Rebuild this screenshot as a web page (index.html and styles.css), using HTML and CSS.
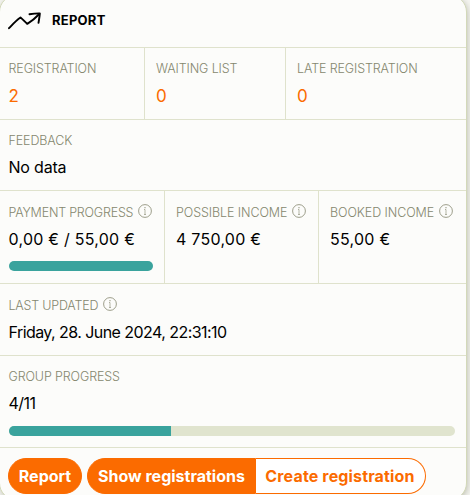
FILE: index.html
```
<!DOCTYPE html>
<html lang="en">
<head>
    <meta charset="UTF-8">
    <meta name="viewport" content="width=device-width, initial-scale=1.0">
    <title>Report</title>
    <link rel="stylesheet" href="styles.css">
</head>
<body>
    <svg class="sprite" width="0" height="0">
        <symbol id="info" viewBox="0 0 14 14">
            <circle cx="7" cy="7" r="6.4" fill="none" stroke="currentColor" stroke-width="0.8"/>
            <path d="M6 5.500H7V10.500M6 10.500H8" fill="none" stroke="currentColor" stroke-width="0.6"/>
            <circle cx="7" cy="3.7" r="0.6" fill="currentColor"/>
        </symbol>
    </svg>

    <div class="card">
        <div class="card-header">
            <svg class="trend-icon" width="34" height="18" viewBox="0 0 34 18" fill="none" stroke="#000" stroke-width="1.9" stroke-linecap="round" stroke-linejoin="round">
                <path d="M1 16.200C4.500 12.500 8 8.500 12.500 5.500C15 7.500 17 10 19.300 11.900C23.500 9.300 27.500 6 31.300 2"/>
                <path d="M21.500 2.300C25 1.700 28.500 1.300 31.800 1.400C31.700 4.500 31 7.500 30.500 10.800"/>
            </svg>
            <h2>REPORT</h2>
        </div>

        <div class="row">
            <div class="cell registration">
                <div class="label">REGISTRATION</div>
                <a href="#" class="value count">2</a>
            </div>
            <div class="cell waiting">
                <div class="label">WAITING LIST</div>
                <a href="#" class="value count">0</a>
            </div>
            <div class="cell">
                <div class="label">LATE REGISTRATION</div>
                <a href="#" class="value count">0</a>
            </div>
        </div>

        <div class="row feedback">
            <div class="cell">
                <div class="label">FEEDBACK</div>
                <div class="value">No data</div>
            </div>
        </div>

        <div class="row income">
            <div class="cell payment">
                <div class="label with-info">PAYMENT PROGRESS <svg class="info"><use href="#info"/></svg></div>
                <div class="value amount">0,00 € / 55,00 €</div>
                <div class="progress"><div class="progress-bar" style="width: 100%"></div></div>
            </div>
            <div class="cell possible">
                <div class="label with-info">POSSIBLE INCOME <svg class="info"><use href="#info"/></svg></div>
                <div class="value amount">4 750,00 €</div>
            </div>
            <div class="cell booked">
                <div class="label with-info">BOOKED INCOME <svg class="info"><use href="#info"/></svg></div>
                <div class="value amount">55,00 €</div>
            </div>
        </div>

        <div class="row">
            <div class="cell">
                <div class="label with-info">LAST UPDATED <svg class="info"><use href="#info"/></svg></div>
                <div class="value date">Friday, 28. June 2024, 22:31:10</div>
            </div>
        </div>

        <div class="row group">
            <div class="cell">
                <div class="label">GROUP PROGRESS</div>
                <div class="value ratio">4/11</div>
                <div class="progress"><div class="progress-bar" style="width: 36.36%"></div></div>
            </div>
        </div>

        <div class="card-footer">
            <a href="#" class="btn btn-report">Report</a>
            <div class="btn-group">
                <a href="#" class="btn btn-show">Show registrations</a>
                <a href="#" class="btn btn-create">Create registration</a>
            </div>
        </div>
    </div>
</body>
</html>
```
FILE: styles.css
```
* {
    box-sizing: border-box;
}

body {
    margin: 0;
    height: 495px;
    overflow: hidden;
    background-color: #f6f6f2;
    font-family: Inter, "Liberation Sans", sans-serif;
    color: #000;
}

.sprite {
    display: none;
}

.card {
    width: 468px;
    height: 505px;
    margin: -5px 0 0 -1px;
    background-color: #fcfcfa;
    border: 1px solid #d3d9b9;
    border-radius: 17px;
    box-shadow: 1px 2px 6px rgba(70, 75, 40, 0.3);
}

.card-header {
    display: flex;
    height: 51px;
    padding: 15px 8px 0;
    gap: 10px;
}

.trend-icon {
    margin-top: 1px;
    flex: none;
}

h2 {
    margin: 0;
    font-size: 13px;
    line-height: 18px;
    font-weight: 700;
    letter-spacing: 0.25px;
}

.row {
    display: flex;
    height: 72px;
    border-top: 1px solid #dfe2cc;
}

.feedback {
    height: 71px;
}

.income {
    height: 93px;
}

.group {
    height: 92px;
}

.cell {
    flex: 1;
    min-width: 0;
    padding: 12px 11px 0;
    border-left: 1px solid #dfe2cc;
    white-space: nowrap;
}

.cell:first-child {
    padding-left: 8.5px;
    border-left: none;
}

.registration {
    flex: 0 0 144px;
}

.waiting {
    flex: 0 0 141px;
}

.payment {
    flex: 0 0 164px;
}

.possible {
    flex: 0 0 154px;
}

.label {
    display: flex;
    gap: 5px;
    height: 18px;
    line-height: 18px;
    font-size: 12.5px;
    font-weight: 300;
    letter-spacing: -0.12px;
    color: #85876e;
}

.with-info {
    height: 19px;
    padding-top: 1px;
    letter-spacing: -0.21px;
}

.possible .label,
.booked .label {
    letter-spacing: -0.08px;
}

.info {
    width: 14px;
    height: 14px;
    flex: none;
}

.value {
    display: block;
    height: 24px;
    margin-top: 5px;
    line-height: 24px;
    font-size: 16px;
    letter-spacing: -0.2px;
    color: #000;
    text-decoration: none;
}

a.value {
    color: #fb6b00;
}

.count {
    margin-top: 6px;
    font-size: 17px;
}

.amount {
    letter-spacing: 0.25px;
}

.date {
    letter-spacing: -0.56px;
}

.ratio {
    letter-spacing: -0.5px;
}

.progress {
    height: 10px;
    margin-top: 10px;
    overflow: hidden;
    border-radius: 5px;
    background-color: #e0e4ce;
}

.ratio + .progress {
    margin-top: 11px;
}

.progress-bar {
    height: 10px;
    background-color: #3aa39d;
}

.card-footer {
    display: flex;
    gap: 5px;
    padding: 10px 8px;
    border-top: 1px solid #dfe2cc;
}

.btn-group {
    display: flex;
}

.btn {
    height: 36px;
    line-height: 34px;
    border: 1px solid #fb6b00;
    background-color: #fb6b00;
    color: #fff;
    font-size: 16px;
    font-weight: 700;
    letter-spacing: 0;
    text-align: center;
    text-decoration: none;
    white-space: nowrap;
}

.btn-report {
    width: 74px;
    border-radius: 18px;
}

.btn-show {
    width: 169px;
    border-radius: 18px 0 0 18px;
}

.btn-create {
    width: 170px;
    border-left: none;
    border-radius: 0 18px 18px 0;
    background-color: #fff;
    color: #fb6b00;
    letter-spacing: 0.15px;
    padding-right: 1px;
}
```
